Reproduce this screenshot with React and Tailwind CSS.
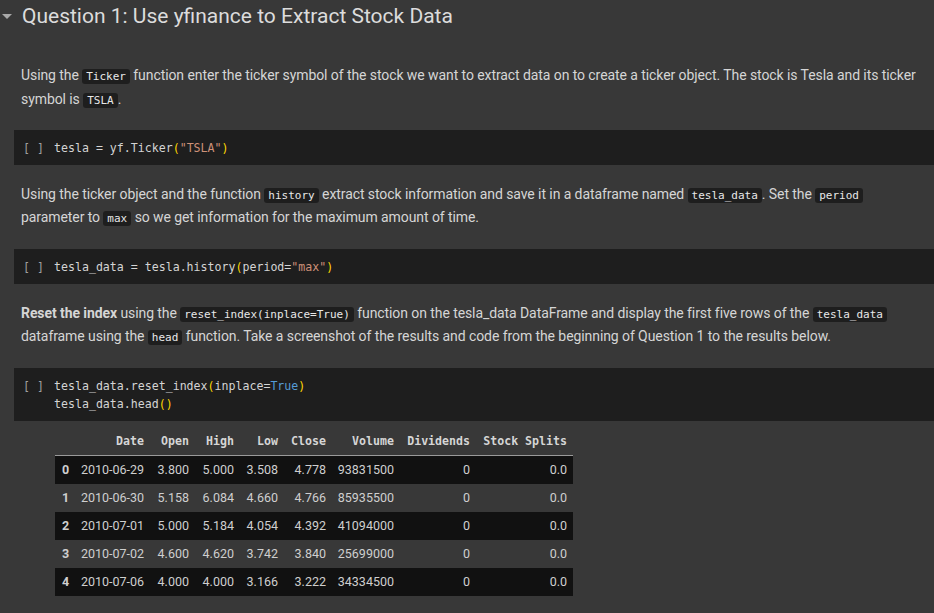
const mono = { fontFamily: "'DejaVu Sans Mono', 'Liberation Mono', monospace" };

const Code = ({ children }) => (
  <code className="rounded-[3px] bg-[#1e1e1e] px-[4px] py-[1px] font-['DejaVu_Sans_Mono',monospace] text-[11px] leading-none tracking-normal text-[#e8e8e8]">
    {children}
  </code>
);

const CodeCell = ({ lines }) => (
  <div className="ml-[14px] flex bg-[#1e1e1e] py-[8.5px] font-['DejaVu_Sans_Mono',monospace] text-[11.6px] leading-[18px] text-[#d4d4d4]">
    <div className="w-[40px] shrink-0 pl-[9px] text-[#a0a0a0]">[ ]</div>
    <div className="whitespace-pre">
      {lines.map((l, i) => (
        <div key={i}>{l}</div>
      ))}
    </div>
  </div>
);

const P = ({ children }) => <span className="text-[#ffd700]">{children}</span>;

const cols = [
  { key: "i", label: "", w: "w-[19px]" },
  { key: "date", label: "Date", w: "w-[76px]" },
  { key: "open", label: "Open", w: "w-[45px]" },
  { key: "high", label: "High", w: "w-[45px]" },
  { key: "low", label: "Low", w: "w-[44px]" },
  { key: "close", label: "Close", w: "w-[48px]" },
  { key: "vol", label: "Volume", w: "w-[68px]" },
  { key: "div", label: "Dividends", w: "w-[76px]" },
  { key: "split", label: "Stock Splits", w: "w-[97px]" },
];

const rows = [
  ["0", "2010-06-29", "3.800", "5.000", "3.508", "4.778", "93831500", "0", "0.0"],
  ["1", "2010-06-30", "5.158", "6.084", "4.660", "4.766", "85935500", "0", "0.0"],
  ["2", "2010-07-01", "5.000", "5.184", "4.054", "4.392", "41094000", "0", "0.0"],
  ["3", "2010-07-02", "4.600", "4.620", "3.742", "3.840", "25699000", "0", "0.0"],
  ["4", "2010-07-06", "4.000", "4.000", "3.166", "3.222", "34334500", "0", "0.0"],
];

export default function App() {
  return (
    <div className="h-[613px] w-[934px] overflow-hidden bg-[#383838] font-['Roboto',sans-serif] text-[#d5d5d5]">
      <div className="flex h-[33px] items-center">
        <svg width="10" height="6" viewBox="0 0 10 6" className="ml-[2px] mr-[10px]">
          <path d="M0 0 L10 0 L5 5 Z" fill="#a8a8a8" />
        </svg>
        <h1 className="text-[21px] text-[#dcdcdc]">Question 1: Use yfinance to Extract Stock Data</h1>
      </div>

      <p className="mt-[30px] pl-[21px] pr-[10px] text-[14px] leading-[24px] tracking-[-0.08px]">
        Using the <Code>Ticker</Code> function enter the ticker symbol of the stock we want to extract data on to create a ticker object. The stock is Tesla and its ticker symbol is <Code>TSLA</Code>.
      </p>

      <div className="mt-[19px]">
        <CodeCell
          lines={[
            <>tesla = yf.Ticker<P>(</P><span className="text-[#ce9178]">"TSLA"</span><P>)</P></>,
          ]}
        />
      </div>

      <p className="mt-[18px] pl-[21px] pr-[10px] text-[14px] leading-[23px] tracking-[-0.08px]">
        Using the ticker object and the function <Code>history</Code> extract stock information and save it in a dataframe named <Code>tesla_data</Code>. Set the <Code>period</Code> parameter to <Code>max</Code> so we get information for the maximum amount of time.
      </p>

      <div className="mt-[20px]">
        <CodeCell
          lines={[
            <>tesla_data = tesla.history<P>(</P>period=<span className="text-[#ce9178]">"max"</span><P>)</P></>,
          ]}
        />
      </div>

      <p className="mt-[18px] pl-[21px] pr-[10px] text-[14px] leading-[23px] tracking-[-0.08px]">
        <b className="font-bold">Reset the index</b> using the <Code>reset_index(inplace=True)</Code> function on the tesla_data DataFrame and display the first five rows of the <Code>tesla_data</Code> dataframe using the <Code>head</Code> function. Take a screenshot of the results and code from the beginning of Question 1 to the results below.
      </p>

      <div className="mt-[20px]">
        <CodeCell
          lines={[
            <>tesla_data.reset_index<P>(</P>inplace=<span className="text-[#569cd6]">True</span><P>)</P></>,
            <>tesla_data.head<P>()</P></>,
          ]}
        />
      </div>

      <div className="ml-[55px] mt-[7px] w-[518px]">
        <div className="flex h-[28px] items-center border-b border-[#9a9a9a] text-[11.6px] font-bold text-[#d5d5d5]" style={mono}>
          {cols.map((c) => (
            <div key={c.key} className={`${c.w} shrink-0 pr-[6px] text-right`}>
              {c.label}
            </div>
          ))}
        </div>
        {rows.map((r, ri) => (
          <div
            key={ri}
            className={`flex h-[28px] items-center text-[12.5px] text-[#cfcfcf] ${ri % 2 === 0 ? "bg-[#111111]" : "bg-[#383838]"}`}
          >
            {r.map((v, ci) => (
              <div
                key={ci}
                className={`${cols[ci].w} shrink-0 ${ci === 0 ? "pl-[7px] font-bold" : "pr-[6px] text-right"}`}
              >
                {v}
              </div>
            ))}
          </div>
        ))}
      </div>
    </div>
  );
}
